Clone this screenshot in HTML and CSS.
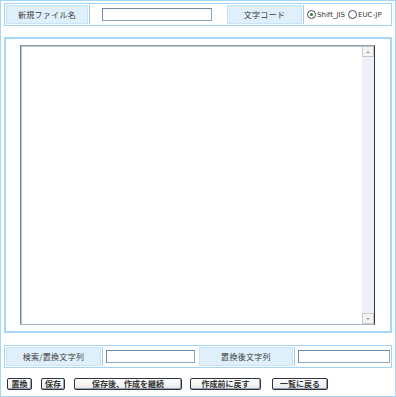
FILE: index.html
```html
<!DOCTYPE html>
<html lang="ja">
<head>
<meta charset="utf-8">
<link rel="stylesheet" href="styles.css">
</head>
<body>
<div class="page">
  <div class="bar top">
    <div class="label l1">新規ファイル名</div>
    <div class="value v1"><input class="field f1" type="text"></div>
    <div class="label l2">文字コード</div>
    <div class="value v2">
      <label class="radio"><span class="dot on"></span>Shift_JIS</label>
      <label class="radio"><span class="dot"></span>EUC-JP</label>
    </div>
  </div>

  <div class="editor">
    <div class="area">
      <textarea class="text"></textarea>
      <div class="scroll">
        <div class="sbtn"><span class="tri up"></span></div>
        <div class="track"></div>
        <div class="sbtn"><span class="tri down"></span></div>
      </div>
    </div>
  </div>

  <div class="bar bottom">
    <div class="label l3">検索/置換文字列</div>
    <div class="value v3"><input class="field f3" type="text"></div>
    <div class="label l4">置換後文字列</div>
    <div class="value v4"><input class="field f4" type="text"></div>
  </div>

  <div class="buttons">
    <button class="btn b1">置換</button>
    <button class="btn b2">保存</button>
    <button class="btn b3">保存後、作成を継続</button>
    <button class="btn b4">作成前に戻す</button>
    <button class="btn b5">一覧に戻る</button>
  </div>
</div>
</body>
</html>
```

FILE: styles.css
```css
* { box-sizing: border-box; }
html, body { margin: 0; padding: 0; background: #fff; }
body {
  font-family: "Noto Sans CJK JP", "DejaVu Sans", sans-serif;
  font-size: 8px;
  color: #333;
}
.page {
  width: 396px;
  height: 397px;
  border: 1px solid #a6d6f8;
  padding: 2px 3px 0 3px;
  display: flex;
  flex-direction: column;
}
.bar {
  display: flex;
  border: 1px solid #a3d3f5;
  height: 23px;
  padding: 1px;
  gap: 1px;
}
.label {
  background: #dff0fb;
  border: 1px solid #c6e5fa;
  display: flex;
  align-items: center;
  justify-content: center;
  color: #3a3a3a;
  font-size: 8px;
  letter-spacing: 0.3px;
}
.value {
  border-left: 1px solid #9ccbee;
  display: flex;
  align-items: center;
}
.l1 { width: 82px; }
.v1 { width: 137px; padding-left: 12px; }
.l2 { width: 75px; }
.v2 { flex: 1; padding-left: 3px; gap: 3px; }
.field {
  height: 13px;
  border: 1px solid #8ea6ba;
  border-top-color: #6f8aa0;
  border-left-color: #6f8aa0;
  background: #fff;
  padding: 0;
  margin: 0;
}
.f1 { width: 110px; }
.radio {
  display: flex;
  align-items: center;
  font-family: "DejaVu Sans", sans-serif;
  font-size: 7px;
  color: #333;
  gap: 1px;
}
.dot {
  width: 9px;
  height: 9px;
  border-radius: 50%;
  border: 1px solid #3b4a5e;
  background: #fff;
  display: flex;
  align-items: center;
  justify-content: center;
}
.dot.on::after {
  content: "";
  width: 3px;
  height: 3px;
  border-radius: 50%;
  background: #2b7a2b;
}
.editor {
  margin-top: 11px;
  height: 296px;
  border: 2px solid #a8d6f8;
  padding: 6px 15px 6px 14px;
}
.area {
  display: flex;
  height: 280px;
  border: 1px solid;
  border-color: #8a9fb2 #2e3b48 #a8b6c4 #6d8aa3;
  box-shadow: inset 1px 1px 0 #b8c4d0;
}
.text {
  flex: 1;
  border: 0;
  margin: 0;
  padding: 0;
  resize: none;
  background: transparent;
  outline: none;
}
.scroll {
  width: 12px;
  display: flex;
  flex-direction: column;
  background: #edf1f6;
}
.sbtn {
  height: 11px;
  background: #f4f4f4;
  border: 1px solid #c9c9c9;
  display: flex;
  align-items: center;
  justify-content: center;
}
.track { flex: 1; }
.tri {
  width: 0;
  height: 0;
  border-left: 2px solid transparent;
  border-right: 2px solid transparent;
}
.tri.up { border-bottom: 2px solid #9a9a9a; }
.tri.down { border-top: 2px solid #9a9a9a; }
.bottom { margin-top: 12px; }
.l3 { width: 96px; }
.v3 { width: 97px; padding-left: 3px; }
.f3 { width: 89px; }
.l4 { width: 95px; }
.v4 { flex: 1; padding-left: 3px; }
.f4 { width: 92px; }
.buttons {
  display: flex;
  margin-top: 10px;
  padding-left: 3px;
}
.btn {
  height: 12px;
  padding: 0;
  margin: 0;
  font-family: "Noto Sans CJK JP", sans-serif;
  font-size: 8px;
  font-weight: bold;
  color: #333;
  line-height: 10px;
  background: linear-gradient(#ffffff, #e8e8e8);
  border: 1px solid #2b3440;
  border-radius: 2px;
  box-shadow: inset -1px -1px 0 #9aa3ad;
}
.b1 { width: 25px; }
.b2 { width: 24px; margin-left: 9px; }
.b3 { width: 108px; margin-left: 9px; }
.b4 { width: 71px; margin-left: 8px; }
.b5 { width: 56px; margin-left: 11px; }
```
